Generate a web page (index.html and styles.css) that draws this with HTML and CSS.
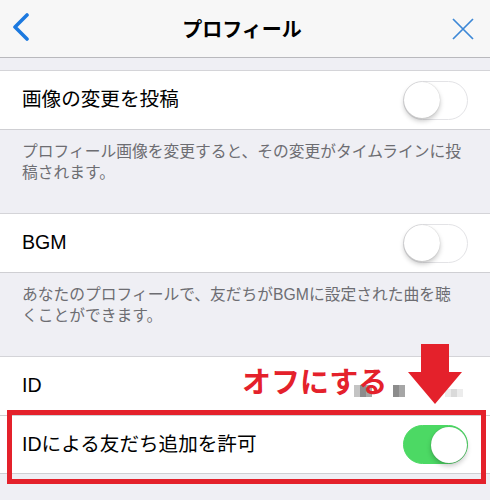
FILE: index.html
```html
<!DOCTYPE html>
<html lang="ja">
<head>
<meta charset="utf-8">
<title>プロフィール</title>
<link rel="stylesheet" href="styles.css">
</head>
<body>
<div class="screen">
  <header class="nav">
    <button class="nav-btn back" aria-label="戻る">
      <svg width="20" height="30" viewBox="0 0 20 30"><polyline points="15,2 3,14 15,26" fill="none" stroke="#1c79df" stroke-width="3.6" stroke-linecap="round" stroke-linejoin="round"/></svg>
    </button>
    <h1 class="nav-title">プロフィール</h1>
    <button class="nav-btn close" aria-label="閉じる">
      <svg width="22" height="22" viewBox="0 0 22 22"><path d="M1 1 L21 21 M21 1 L1 21" stroke="#3d88d6" stroke-width="1.7" fill="none"/></svg>
    </button>
  </header>

  <main class="settings">
    <section class="group">
      <div class="cell">
        <span class="label">画像の変更を投稿</span>
        <span class="switch"><span class="knob"></span></span>
      </div>
    </section>
    <p class="footnote">プロフィール画像を変更すると、その変更がタイムラインに投稿されます。</p>

    <section class="group">
      <div class="cell">
        <span class="label">BGM</span>
        <span class="switch"><span class="knob"></span></span>
      </div>
    </section>
    <p class="footnote">あなたのプロフィールで、友だちがBGMに設定された曲を聴くことができます。</p>

    <section class="group">
      <div class="cell">
        <span class="label">ID</span>
        <span class="masked">
          <i class="px p3"></i><i class="px p2"></i><i class="px p1"></i>
          <i class="gap"></i>
          <i class="px p2"></i><i class="px p1"></i>
          <i class="gap wide"></i>
          <i class="px p5"></i><i class="px p6"></i><i class="px p5"></i>
        </span>
      </div>
      <div class="cell">
        <span class="label">IDによる友だち追加を許可</span>
        <span class="switch on"><span class="knob"></span></span>
      </div>
    </section>
  </main>

  <!-- annotation layer -->
  <div class="mark-box"></div>
  <div class="mark-text">オフにする</div>
  <svg class="mark-arrow" width="56" height="62" viewBox="0 0 56 62">
    <polygon points="13,0 41,0 41,28 54,28 27,60 0,28 13,28" fill="#e4212b"/>
  </svg>
</div>
</body>
</html>
```

FILE: styles.css
```css
* { box-sizing: border-box; }

html, body {
  margin: 0;
  padding: 0;
}

body {
  background: #efeff4;
  font-family: "Liberation Sans", "Noto Sans CJK JP", sans-serif;
  color: #000;
}

.screen {
  position: relative;
  width: 490px;
  height: 500px;
  overflow: hidden;
}

/* navigation bar */
.nav {
  height: 58px;
  background: #f7f7f7;
  border-bottom: 1px solid #b9b9bd;
  display: flex;
  align-items: center;
  justify-content: space-between;
  padding: 0 14px 1px 12px;
}

.nav-btn {
  background: none;
  border: 0;
  padding: 0;
  display: flex;
  align-items: center;
}

.nav-btn.close { margin-right: 2px; margin-top: 2px; }

.nav-title {
  margin: 0;
  font-family: "Noto Sans CJK JP", sans-serif;
  font-size: 20px;
  font-weight: 700;
}

/* grouped table */
.settings {
  padding-top: 12px;
}

.group {
  background: #fff;
  border-top: 1px solid #d4d4d8;
  border-bottom: 1px solid #cfcfd3;
}

.cell {
  height: 58px;
  display: flex;
  align-items: center;
  justify-content: space-between;
  padding: 0 22px;
}

.cell + .cell {
  border-top: 1px solid #d0d0d4;
}

.label {
  font-size: 19.6px;
  line-height: 1;
}

.footnote {
  margin: 0;
  height: 83px;
  padding: 12px 25px 0 22px;
  font-family: "Liberation Sans", "Noto Sans CJK JP", sans-serif;
  font-size: 15.75px;
  line-height: 20.5px;
  color: #6d6d72;
}

/* iOS style switch */
.switch {
  width: 65px;
  height: 39px;
  border-radius: 20px;
  border: 1.5px solid #e3e3e6;
  background: #fff;
  display: flex;
  align-items: center;
  justify-content: flex-start;
}

.knob {
  width: 36px;
  height: 36px;
  border-radius: 50%;
  background: #fff;
  box-shadow: 0 3px 5px rgba(0, 0, 0, 0.22), 0 0 1px rgba(0, 0, 0, 0.25);
}

.switch.on {
  background: #4cd964;
  border-color: #4cd964;
  justify-content: flex-end;
}

/* pixelated placeholder for the hidden ID */
.masked {
  display: flex;
  align-items: flex-end;
  height: 14px;
  margin-top: 8px;
  margin-right: 5px;
}

.px {
  display: block;
  width: 6px;
  height: 12px;
}

.p1 { background: #a6a6a6; }
.p2 { background: #8c8c8c; }
.p3 { background: #c4c4c4; }
.p5 { background: #ececec; height: 8px; }
.p6 { background: #dadada; height: 8px; }

.gap { display: block; width: 21px; }
.gap.wide { width: 40px; }

/* annotation layer */
.mark-box {
  position: absolute;
  left: 7px;
  top: 410px;
  width: 479px;
  height: 74px;
  border: 5px solid #e4212b;
}

.mark-text {
  position: absolute;
  left: 242px;
  top: 362px;
  font-family: "Noto Sans CJK JP", sans-serif;
  font-weight: 700;
  font-size: 29px;
  line-height: 36px;
  color: #e4212b;
}

.mark-arrow {
  position: absolute;
  left: 408px;
  top: 344px;
}
```
